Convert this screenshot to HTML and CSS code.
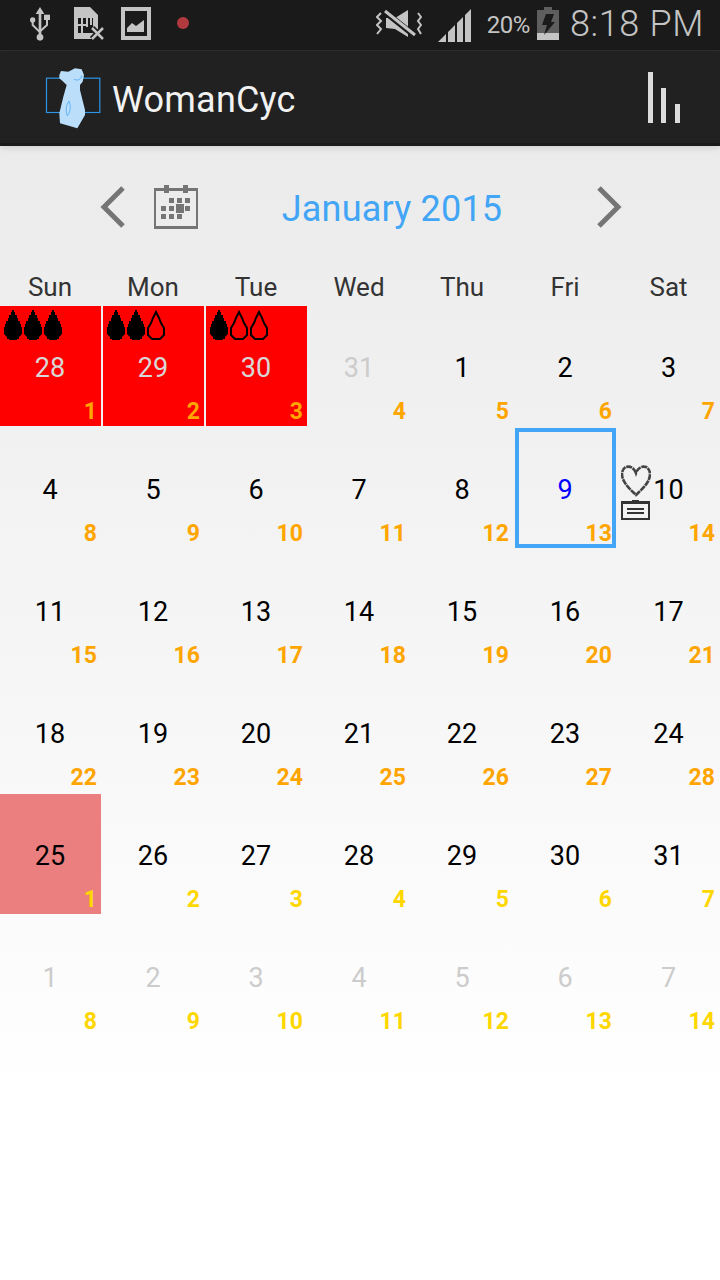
FILE: index.html
```html
<!DOCTYPE html>
<html lang="en">
<head>
  <meta charset="UTF-8" />
  <title>WomanCyc</title>
  <link rel="stylesheet" href="styles.css">
</head>
<body>

  <div class="statusbar">
    <div class="status-left">
      <svg class="icon-usb" width="20" height="34" viewBox="90 21 60 102">
        <path fill="#c4c4c4" d="M120 21l13 21h-9v70h-8V42h-9z"/>
        <circle fill="#c4c4c4" cx="120" cy="112" r="10"/>
        <circle fill="#c4c4c4" cx="98" cy="60" r="8"/>
        <path fill="#c4c4c4" d="M132 44h18v16h-18z"/>
        <path fill="none" stroke="#c4c4c4" stroke-width="6" d="M98 60v15l20 20M141 60v15l-19 17"/>
      </svg>
      <svg class="icon-sim" width="31" height="34" viewBox="0 0 31 34">
        <path fill="#c4c4c4" d="M1 0h16l8 8v17l-6 7H1z"/>
        <path fill="#1a1a1a" d="M5 11h15v15H5z"/>
        <path fill="#c4c4c4" d="M8 11h2v15H8zM13 11h2v9h-2zM17 11h2v7h-2zM5 17h9v2H5z"/>
        <path stroke="#1a1a1a" stroke-width="6" d="M19 21l11 11M30 21L19 32"/>
        <path stroke="#c4c4c4" stroke-width="2.500" d="M19 21l11 11M30 21L19 32"/>
      </svg>
      <svg class="icon-pic" width="30" height="33" viewBox="0 0 30 33">
        <path fill="#c4c4c4" fill-rule="evenodd" d="M0 0h30v33H0zM4 4v25h22V4z"/>
        <path fill="#c4c4c4" d="M6 25v-4l5-5 4 3 8-6v12z"/>
      </svg>
      <span class="rec-dot"></span>
    </div>
    <div class="status-right">
      <svg class="icon-mute" width="46" height="30" viewBox="0 0 46 30">
        <path fill="#c4c4c4" d="M10 9h9l13-8v27l-13-8-9-1z"/>
        <path stroke="#1a1a1a" stroke-width="6" d="M9 3l30 24"/>
        <path stroke="#c4c4c4" stroke-width="3" d="M9 2l30 24"/>
        <path fill="none" stroke="#c4c4c4" stroke-width="2" d="M5 4L1 8l4 4-4 4 4 4-4 5M42 4l3 4-3 4 3 4-3 4 3 5"/>
      </svg>
      <svg class="icon-signal" width="33" height="33" viewBox="0 0 33 33" fill="#c4c4c4">
        <path d="M0 33l8-8v8zM10 33V23l7-7v17zM19 33V14l6-6v25zM27 33V6l6-6v33z"/>
      </svg>
      <span class="battery-pct">20%</span>
      <svg class="icon-battery" width="22" height="33" viewBox="0 0 22 33">
        <path fill="#5e5e5e" d="M7 0h8v3h7v24H0V3h7z"/>
        <path fill="#c4c4c4" d="M0 26h22v7H0z"/>
        <path fill="#1a1a1a" d="M9 7h8l-3 8h4L7 28l3-10H5z"/>
      </svg>
      <span class="clock">8:18 PM</span>
    </div>
  </div>

  <div class="actionbar">
    <div class="brand">
      <span class="logo">
        <svg width="57" height="65" viewBox="135 195 171 195">
          <rect x="139.500" y="234.500" width="160" height="103" fill="none" stroke="#2f96e6" stroke-width="3.500"/>
          <path fill="#bbdefb" d="M178 225l5-12 22 2 20-10 20 3 7 17-4 20-8 10v15l15 60v15l-23 40-52-15-2-30 12-50 10-35-10-10-12-10z"/>
          <path fill="none" stroke="#64b5f6" stroke-width="3" d="M222 238q18 8 24-12M207 303q-14 20-5 45 15-20 5-45z"/>
        </svg>
      </span>
      <span class="app-title">WomanCyc</span>
    </div>
    <svg class="icon-chart" width="33" height="52" viewBox="0 0 33 52" fill="#dcdcdc">
      <path d="M0 0h5v51H0zM13 16h5v35h-5zM27 32h5v19h-5z"/>
    </svg>
  </div>

  <main class="calendar">
    <div class="month-nav">
      <svg class="chevron chev-left" width="26" height="44" viewBox="0 0 26 44">
        <path fill="none" stroke="#757575" stroke-width="5" d="M23 3L4 22l19 19"/>
      </svg>
      <svg class="icon-cal" width="44" height="44" viewBox="0 0 44 44" fill="#757575">
        <path fill-rule="evenodd" d="M0 3h44v41H0zM2 6v35h40V6z"/>
        <path d="M10 0h5v8h-5zM29 0h5v8h-5zM15 13h5v5h-5zM23 13h5v5h-5zM31 13h5v5h-5zM7 21h5v5H7zM15 21h5v5h-5zM22 19h8v9h-8zM31 21h5v5h-5zM7 29h5v5H7zM15 29h5v5h-5zM23 29h5v5h-5z"/>
      </svg>
      <h1 class="month-title">January 2015</h1>
      <svg class="chevron chev-right" width="26" height="44" viewBox="0 0 26 44">
        <path fill="none" stroke="#757575" stroke-width="5" d="M3 3l19 19L3 41"/>
      </svg>
    </div>

    <div class="weekdays">
      <span>Sun</span><span>Mon</span><span>Tue</span><span>Wed</span><span>Thu</span><span>Fri</span><span>Sat</span>
    </div>

    <div class="days">
      <div class="day period muted">
        <span class="drops">
          <svg class="drop"><use href="#drop-full"/></svg><svg class="drop"><use href="#drop-full"/></svg><svg class="drop"><use href="#drop-full"/></svg>
        </span>
        <span class="num">28</span><span class="cyc">1</span>
      </div>
      <div class="day period muted">
        <span class="drops">
          <svg class="drop"><use href="#drop-full"/></svg><svg class="drop"><use href="#drop-full"/></svg><svg class="drop"><use href="#drop-empty"/></svg>
        </span>
        <span class="num">29</span><span class="cyc">2</span>
      </div>
      <div class="day period muted">
        <span class="drops">
          <svg class="drop"><use href="#drop-full"/></svg><svg class="drop"><use href="#drop-empty"/></svg><svg class="drop"><use href="#drop-empty"/></svg>
        </span>
        <span class="num">30</span><span class="cyc">3</span>
      </div>
      <div class="day other"><span class="num">31</span><span class="cyc">4</span></div>
      <div class="day"><span class="num">1</span><span class="cyc">5</span></div>
      <div class="day"><span class="num">2</span><span class="cyc">6</span></div>
      <div class="day"><span class="num">3</span><span class="cyc">7</span></div>

      <div class="day"><span class="num">4</span><span class="cyc">8</span></div>
      <div class="day"><span class="num">5</span><span class="cyc">9</span></div>
      <div class="day"><span class="num">6</span><span class="cyc">10</span></div>
      <div class="day"><span class="num">7</span><span class="cyc">11</span></div>
      <div class="day"><span class="num">8</span><span class="cyc">12</span></div>
      <div class="day today"><span class="num">9</span><span class="cyc">13</span></div>
      <div class="day">
        <span class="notes">
          <svg width="30" height="32" viewBox="0 0 30 32">
            <path fill="none" stroke="#444" stroke-width="2.600" stroke-dasharray="6 0.700" d="M15 8C13 2 8 1 5 2 1 4 0 9 2 14c2 6 8 11 13 16 5-5 11-10 13-16 2-5 1-10-3-12-3-1-8 0-10 6z"/>
          </svg>
          <svg width="29" height="20" viewBox="0 0 29 20">
            <path fill="#333" fill-rule="evenodd" d="M0 1h11V0h7v1h11v19H0zM2 4v14h25V4z"/>
            <path fill="#333" d="M6 8h17v2H6zM6 12h17v2H6z"/>
          </svg>
        </span>
        <span class="num">10</span><span class="cyc">14</span>
      </div>

      <div class="day"><span class="num">11</span><span class="cyc">15</span></div>
      <div class="day"><span class="num">12</span><span class="cyc">16</span></div>
      <div class="day"><span class="num">13</span><span class="cyc">17</span></div>
      <div class="day"><span class="num">14</span><span class="cyc">18</span></div>
      <div class="day"><span class="num">15</span><span class="cyc">19</span></div>
      <div class="day"><span class="num">16</span><span class="cyc">20</span></div>
      <div class="day"><span class="num">17</span><span class="cyc">21</span></div>

      <div class="day"><span class="num">18</span><span class="cyc">22</span></div>
      <div class="day"><span class="num">19</span><span class="cyc">23</span></div>
      <div class="day"><span class="num">20</span><span class="cyc">24</span></div>
      <div class="day"><span class="num">21</span><span class="cyc">25</span></div>
      <div class="day"><span class="num">22</span><span class="cyc">26</span></div>
      <div class="day"><span class="num">23</span><span class="cyc">27</span></div>
      <div class="day"><span class="num">24</span><span class="cyc">28</span></div>

      <div class="day next-cycle start"><span class="num">25</span><span class="cyc">1</span></div>
      <div class="day next-cycle"><span class="num">26</span><span class="cyc">2</span></div>
      <div class="day next-cycle"><span class="num">27</span><span class="cyc">3</span></div>
      <div class="day next-cycle"><span class="num">28</span><span class="cyc">4</span></div>
      <div class="day next-cycle"><span class="num">29</span><span class="cyc">5</span></div>
      <div class="day next-cycle"><span class="num">30</span><span class="cyc">6</span></div>
      <div class="day next-cycle"><span class="num">31</span><span class="cyc">7</span></div>

      <div class="day next-cycle other"><span class="num">1</span><span class="cyc">8</span></div>
      <div class="day next-cycle other"><span class="num">2</span><span class="cyc">9</span></div>
      <div class="day next-cycle other"><span class="num">3</span><span class="cyc">10</span></div>
      <div class="day next-cycle other"><span class="num">4</span><span class="cyc">11</span></div>
      <div class="day next-cycle other"><span class="num">5</span><span class="cyc">12</span></div>
      <div class="day next-cycle other"><span class="num">6</span><span class="cyc">13</span></div>
      <div class="day next-cycle other"><span class="num">7</span><span class="cyc">14</span></div>
    </div>
  </main>

  <svg class="sprites" width="0" height="0">
    <symbol id="drop-full" viewBox="0 0 20 30">
      <path fill="#000" d="M9 0h2v2h1v3h2v3h1v3h2v3h1v3h1v7l-3 3v2h-2v1H6v-1H4v-2l-3-3v-7h1v-3h1v-3h2V8h1V5h2V2h1z"/>
    </symbol>
    <symbol id="drop-empty" viewBox="0 0 20 30">
      <path fill="none" stroke="#000" stroke-width="2" d="M10 2l3 6 2 5 3 5v7l-4 4H6l-4-4v-7l3-5 2-5z"/>
    </symbol>
  </svg>

</body>
</html>
```

FILE: styles.css
```css
* {
  box-sizing: border-box;
}

body {
  margin: 0;
  width: 720px;
  height: 1280px;
  overflow: hidden;
  font-family: Roboto, sans-serif;
  background: linear-gradient(to bottom, #ebebeb 146px, #ffffff 1100px);
  color: #000;
}

/* status bar */
.statusbar {
  height: 51px;
  display: flex;
  justify-content: space-between;
  background-color: #1a1a1a;
  border-bottom: 1px solid #2e2e2e;
  padding: 7px 16px 0 30px;
  color: #c4c4c4;
}

.status-left,
.status-right {
  display: flex;
  align-items: flex-start;
}

.icon-sim {
  margin-left: 23px;
}

.icon-pic {
  margin-left: 17px;
}

.rec-dot {
  width: 12px;
  height: 12px;
  margin: 10px 0 0 26px;
  border-radius: 50%;
  background-color: #b23a3e;
}

.icon-mute {
  margin-top: 2px;
}

.icon-signal {
  margin: 2px 0 0 16px;
}

.battery-pct {
  margin: 4px 0 0 16px;
  font-size: 24px;
  letter-spacing: -0.5px;
}

.icon-battery {
  margin-left: 7px;
}

.clock {
  margin: -4px 0 0 11px;
  font-size: 36px;
  line-height: 42px;
  font-weight: 300;
  letter-spacing: 0.65px;
}

/* action bar */
.actionbar {
  height: 95px;
  display: flex;
  justify-content: space-between;
  align-items: center;
  padding: 4px 39px 0 45px;
  background-color: #212121;
  border-bottom: 3px solid #1a1a1a;
  box-shadow: 0 2px 6px rgba(0, 0, 0, 0.12);
}

.brand {
  display: flex;
  align-items: center;
}

.logo {
  display: flex;
  width: 68px;
  margin-top: -4px;
}

.app-title {
  margin: 2px 0 0 -1px;
  font-size: 36px;
  letter-spacing: 0.2px;
  color: #f2f2f2;
}

.icon-chart {
  margin-top: -2px;
}

/* calendar */
.month-nav {
  height: 122px;
  display: flex;
  align-items: center;
  padding-left: 100px;
}

.icon-cal {
  margin-left: 28px;
}

.month-title {
  width: 388px;
  margin: 4px 10px 0 0;
  text-align: center;
  font-size: 36px;
  font-weight: 400;
  letter-spacing: 0.2px;
  color: #42a5f5;
}

.weekdays {
  height: 38px;
  display: grid;
  grid-template-columns: repeat(6, 101px) 102px;
  column-gap: 2px;
  text-align: center;
  font-size: 26px;
  line-height: 38px;
  color: #333;
}

.weekdays span {
  padding-right: 1px;
}

.days {
  display: grid;
  grid-template-columns: repeat(6, 101px) 102px;
  grid-auto-rows: 120px;
  gap: 2px;
}

.day {
  position: relative;
  display: flex;
  align-items: center;
  justify-content: center;
  padding: 4px 1px 0 0;
  font-size: 27px;
}

.cyc {
  position: absolute;
  right: 4px;
  bottom: 1px;
  font-size: 23px;
  font-weight: 700;
  color: #ffa500;
}

.day:nth-child(7n) .cyc {
  right: 5px;
}

.next-cycle .cyc {
  color: #ffd700;
}

.period {
  background-color: #ff0000;
}

.muted .num {
  color: #d8d8d8;
}

.other .num {
  color: #cccccc;
}

.start {
  background-color: #eb7f7f;
}

.today {
  border: 4px solid #42a5f5;
}

.today .num {
  color: #0000ff;
}

.today .cyc {
  right: 0;
  bottom: -3px;
}

.drops {
  position: absolute;
  top: 4px;
  left: 3px;
  display: flex;
}

.drop {
  width: 20px;
  height: 30px;
}

.notes {
  position: absolute;
  left: 3px;
  top: 37px;
  display: flex;
  flex-direction: column;
  gap: 3px;
}

.sprites {
  position: absolute;
}
```
